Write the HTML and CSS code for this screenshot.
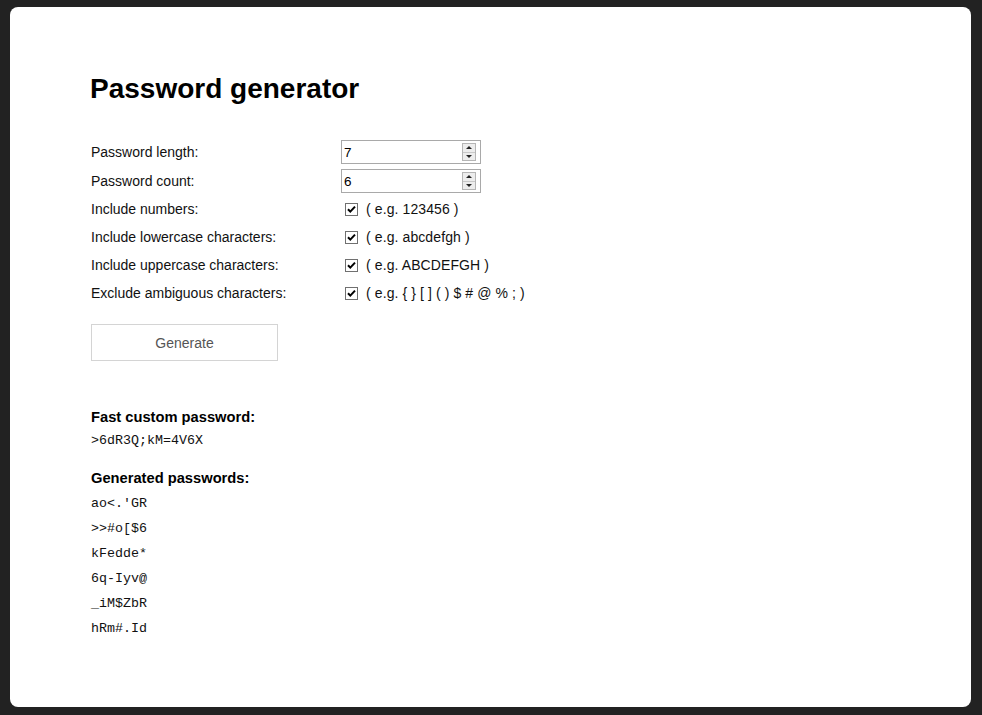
FILE: index.html
```html
<!DOCTYPE html>
<html>
<head>
<meta charset="utf-8">
<title>Password generator</title>
<link rel="stylesheet" href="styles.css">
</head>
<body>
<main class="panel">
  <h1 class="title">Password generator</h1>
  <div class="form">
    <div class="row row-first">
      <span class="lbl">Password length:</span>
      <div class="num"><input class="num-in" type="text" value="7"><span class="spin"><span class="half"><span class="tri-up"></span></span><span class="half"><span class="tri-down"></span></span></span></div>
    </div>
    <div class="row">
      <span class="lbl">Password count:</span>
      <div class="num"><input class="num-in" type="text" value="6"><span class="spin"><span class="half"><span class="tri-up"></span></span><span class="half"><span class="tri-down"></span></span></span></div>
    </div>
    <div class="row">
      <span class="lbl">Include numbers:</span>
      <span class="cb"><svg viewBox="0 0 11 11" width="11" height="11"><path d="M2 5.2 L4.3 7.6 L9 2.6" fill="none" stroke="#000" stroke-width="2"/></svg></span>
      <span class="hint">( e.g. 123456 )</span>
    </div>
    <div class="row">
      <span class="lbl">Include lowercase characters:</span>
      <span class="cb"><svg viewBox="0 0 11 11" width="11" height="11"><path d="M2 5.2 L4.3 7.6 L9 2.6" fill="none" stroke="#000" stroke-width="2"/></svg></span>
      <span class="hint">( e.g. abcdefgh )</span>
    </div>
    <div class="row">
      <span class="lbl">Include uppercase characters:</span>
      <span class="cb"><svg viewBox="0 0 11 11" width="11" height="11"><path d="M2 5.2 L4.3 7.6 L9 2.6" fill="none" stroke="#000" stroke-width="2"/></svg></span>
      <span class="hint">( e.g. ABCDEFGH )</span>
    </div>
    <div class="row">
      <span class="lbl">Exclude ambiguous characters:</span>
      <span class="cb"><svg viewBox="0 0 11 11" width="11" height="11"><path d="M2 5.2 L4.3 7.6 L9 2.6" fill="none" stroke="#000" stroke-width="2"/></svg></span>
      <span class="hint">( e.g. { } [ ] ( ) $ # @ % ; )</span>
    </div>
  </div>
  <button class="gen" type="button">Generate</button>
  <section class="fast">
    <h2 class="sub">Fast custom password:</h2>
    <p class="mono">&gt;6dR3Q;kM=4V6X</p>
  </section>
  <section class="list">
    <h2 class="sub">Generated passwords:</h2>
    <p class="mono">ao&lt;.'GR</p>
    <p class="mono">&gt;&gt;#o[$6</p>
    <p class="mono">kFedde*</p>
    <p class="mono">6q-Iyv@</p>
    <p class="mono">_iM$ZbR</p>
    <p class="mono">hRm#.Id</p>
  </section>
</main>
</body>
</html>
```
FILE: styles.css
```css
* { box-sizing: border-box; }
html, body { margin: 0; padding: 0; }
body {
  background: #222222;
  font-family: Arial, "Liberation Sans", sans-serif;
  color: #000;
  height: 715px;
  overflow: hidden;
}
.panel {
  margin: 7px 11px 0 10px;
  height: 700px;
  background: #fff;
  border-radius: 8px;
  padding: 66px 80px 0 80px;
}
.title {
  margin: 0;
  font-size: 28px;
  line-height: 32px;
  font-weight: bold;
  color: #000;
}
.form {
  margin-top: 33px;
  display: flex;
  flex-direction: column;
}
.row {
  height: 28px;
  display: flex;
  align-items: center;
  font-size: 14px;
}
.row-first {
  height: 29px;
  align-items: flex-start;
  padding-top: 2px;
}
.row-first .lbl { line-height: 24px; }
.lbl {
  width: 251px;
  flex: none;
  padding-left: 1px;
  color: #111;
}
.num {
  width: 140px;
  height: 24px;
  border: 1px solid #a9a9a9;
  display: flex;
  align-items: center;
  padding: 0 4px 0 2px;
}
.num-in {
  flex: 1;
  min-width: 0;
  border: 0;
  outline: none;
  padding: 0;
  font-family: Arial, "Liberation Sans", sans-serif;
  font-size: 13.5px;
  color: #000;
  background: transparent;
}
.spin {
  width: 14px;
  height: 18px;
  border: 1px solid #b5b5b5;
  display: flex;
  flex-direction: column;
  background: #ededed;
}
.half {
  flex: 1;
  display: flex;
  align-items: center;
  justify-content: center;
}
.half + .half { border-top: 1px solid #c8c8c8; }
.tri-up {
  width: 0; height: 0;
  border-left: 3px solid transparent;
  border-right: 3px solid transparent;
  border-bottom: 3px solid #222;
}
.tri-down {
  width: 0; height: 0;
  border-left: 3px solid transparent;
  border-right: 3px solid transparent;
  border-top: 3px solid #222;
}
.cb {
  width: 13px;
  height: 13px;
  margin-left: 4px;
  border: 1px solid #707070;
  background: #fff;
  display: flex;
  align-items: center;
  justify-content: center;
  flex: none;
}
.hint {
  margin-left: 8px;
  color: #111;
  letter-spacing: 0.1px;
}
.gen {
  display: block;
  margin-top: 17px;
  margin-left: 1px;
  width: 187px;
  height: 37px;
  border: 1px solid #d4d4d4;
  background: #fff;
  color: #555;
  font-family: Arial, "Liberation Sans", sans-serif;
  font-size: 14px;
  padding: 0;
}
.sub {
  margin: 0;
  font-size: 14.7px;
  font-weight: bold;
  padding-left: 1px;
}
.mono {
  margin: 0;
  font-family: "Courier New", "Liberation Mono", monospace;
  font-size: 13.33px;
  padding-left: 1px;
  color: #111;
}
.fast { margin-top: 44px; }
.fast .sub { line-height: 24px; }
.fast .mono { line-height: 24px; }
.list { margin-top: 13px; }
.list .sub, .list .mono { line-height: 25px; }
```
